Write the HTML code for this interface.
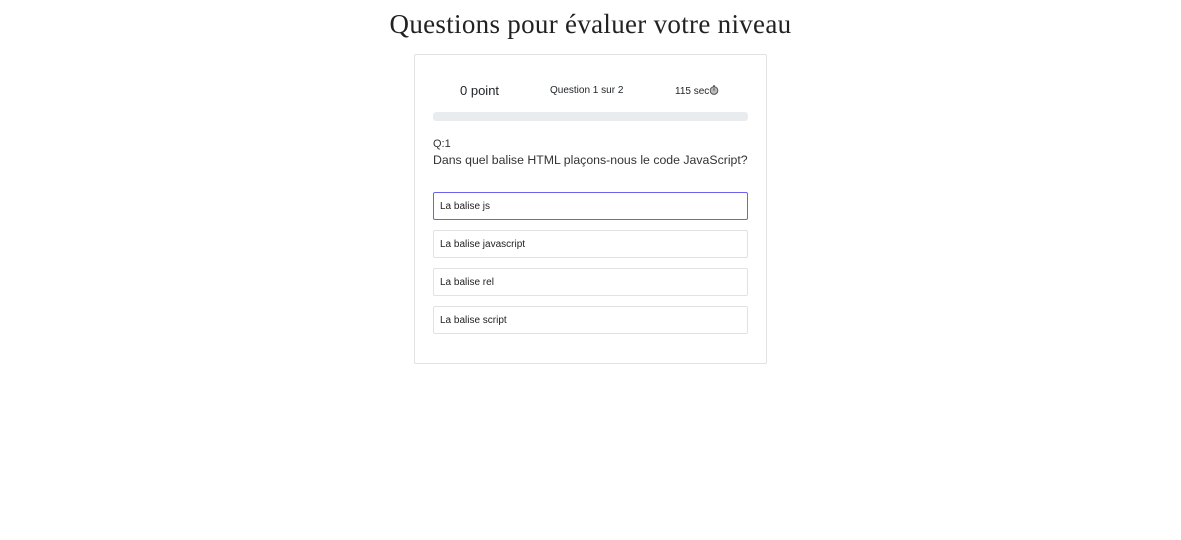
<!DOCTYPE html>
<html><head><meta charset="utf-8"><style>
body{margin:0;background:#fff;font-family:"Liberation Sans",sans-serif;color:#212529;}
h1{position:absolute;top:9px;left:0;width:1181px;text-align:center;margin:0;font-family:"Liberation Serif",serif;font-weight:400;font-size:27px;letter-spacing:0.3px;color:#222;}
.card{position:absolute;left:414px;top:54px;width:351px;height:308px;border:1px solid #e2e2e2;border-radius:2px;}
.t{position:absolute;top:28px;font-size:13px;}
.bar{position:absolute;left:18px;top:57px;width:315px;height:9px;background:#e9ecef;border-radius:3px;}
.q1{position:absolute;left:18px;top:83px;font-size:11px;color:#333;}
.q{position:absolute;left:18px;top:98px;font-size:12.3px;color:#333;}
.opt{position:absolute;left:18px;height:26px;border:1px solid #e2e2e2;border-radius:2px;font-size:10px;line-height:28px;padding-left:6px;width:307px;color:#222;}
.sel{border-color:#6b63f0;}
</style></head><body>
<h1>Questions pour évaluer votre niveau</h1>
<div class="card">
<div class="t" style="left:45px;font-size:13px">0 point</div>
<div class="t" style="left:135px;font-size:10px;top:30px">Question 1 sur 2</div>
<div class="t" style="left:260px;font-size:10px;top:30px">115 sec<svg width="10" height="10" viewBox="0 0 10 10" style="vertical-align:-1px"><circle cx="5" cy="5.6" r="3.8" fill="#bbb" stroke="#555" stroke-width="1"/><rect x="4" y="0.3" width="2" height="1.2" fill="#555"/><line x1="5" y1="5.6" x2="5" y2="3.2" stroke="#333" stroke-width="0.8"/></svg></div>
<div class="bar"></div>
<div class="q1">Q:1</div>
<div class="q">Dans quel balise HTML plaçons-nous le code JavaScript?</div>
<div class="opt sel" style="top:137px">La balise js</div>
<div class="opt" style="top:175px">La balise javascript</div>
<div class="opt" style="top:213px">La balise rel</div>
<div class="opt" style="top:251px">La balise script</div>
</div>
</body></html>
